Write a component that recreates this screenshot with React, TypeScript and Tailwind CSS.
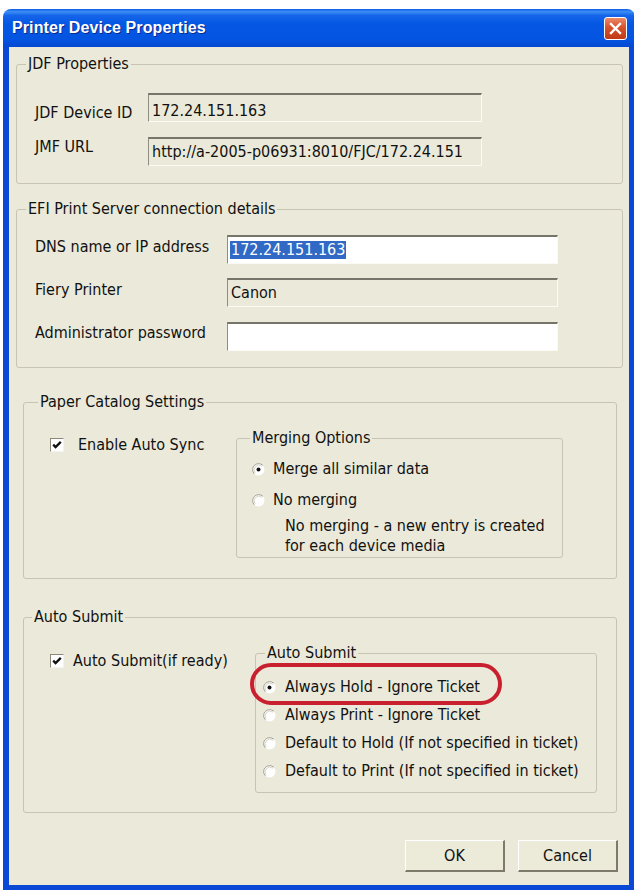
import React from "react";

function Radio({ checked = false }: { checked?: boolean }) {
  return (
    <svg width="13" height="13" viewBox="0 0 13 13" className="shrink-0">
      <circle cx="6.5" cy="6.5" r="6" fill="#ffffff" />
      <path d="M2.26 10.74 A6 6 0 0 1 10.74 2.26" stroke="#a19e90" strokeWidth="1" fill="none" />
      <path d="M3.2 9.8 A4.7 4.7 0 0 1 9.8 3.2" stroke="#d6d4c9" strokeWidth="1" fill="none" />
      {checked && <circle cx="6.5" cy="6.5" r="2" fill="#111111" />}
    </svg>
  );
}

function Checkbox() {
  return (
    <span className="w-[14px] h-[14px] shrink-0 bg-white border-t border-l border-t-[#8c897a] border-l-[#8c897a] border-b border-r border-b-[#f4f3ee] border-r-[#f4f3ee] flex items-center justify-center">
      <svg width="12" height="12" viewBox="0 0 12 12">
        <path d="M2.2 5.6 L4.6 8.1 L9.8 2.9" stroke="#101010" strokeWidth="2.3" fill="none" />
      </svg>
    </span>
  );
}

function Field({
  value,
  white = false,
  selected = false,
  width,
  extra = "",
}: {
  value?: string;
  white?: boolean;
  selected?: boolean;
  width: string;
  extra?: string;
}) {
  return (
    <div
      className={`${width} h-[29px] flex items-center pl-[2px] border-t-2 border-l border-t-[#77746a] border-l-[#8f8c80] border-b border-r border-b-[#fbfaf5] border-r-[#fbfaf5] ${
        white ? "bg-white" : "bg-[#ebe9d9]"
      } ${extra}`}
    >
      {value &&
        (selected ? (
          <span className="bg-[#316ac5] text-white leading-[18px] px-[1px]">{value}</span>
        ) : (
          <span className="leading-[18px] px-[1px]">{value}</span>
        ))}
    </div>
  );
}

function Button({ label }: { label: string }) {
  return (
    <button className="w-[100px] h-[32px] bg-[#ecead9] border-t border-l border-t-white border-l-white border-b-2 border-r-2 border-b-[#7d7a6c] border-r-[#7d7a6c] text-[16px] leading-[18px]">
      {label}
    </button>
  );
}

export default function App() {
  return (
    <div className="w-[634px] h-[890px] bg-white overflow-hidden pt-[9px] pl-[3px] font-['DejaVu_Sans_Condensed','DejaVu_Sans',sans-serif] text-[16px] text-[#111111]">
      <div className="w-[632px] h-[881px] flex flex-col rounded-t-[8px] overflow-hidden">
        {/* caption bar */}
        <div className="h-[38px] shrink-0 flex items-center justify-between pl-[9px] pr-[8px] bg-[linear-gradient(to_bottom,#0a5ce6_0%,#3d8df5_7%,#1565ea_17%,#0457e3_40%,#0454e2_80%,#0348d1_100%)]">
          <span className="font-['Liberation_Sans',sans-serif] font-bold text-[16px] tracking-[0.1px] text-white [text-shadow:1px_1px_0_#0a2a8a]">
            Printer Device Properties
          </span>
          <div className="w-[23px] h-[23px] rounded-[3px] border border-white bg-[linear-gradient(to_bottom,#ec8a6a,#d5522c_45%,#c03a16)] flex items-center justify-center">
            <svg width="13" height="13" viewBox="0 0 13 13">
              <path d="M2 2 L11 11 M11 2 L2 11" stroke="#ffffff" strokeWidth="2.4" strokeLinecap="square" />
            </svg>
          </div>
        </div>

        {/* client area */}
        <div className="flex-1 flex flex-col border-x-[6px] border-b-[5px] border-[#0a48d6] bg-[#ebe9d9]">
          {/* JDF Properties */}
          <fieldset className="mt-[8px] ml-[7px] w-[607px] h-[129px] border border-[#c7c4b4] rounded-[3px]">
            <legend className="ml-[9px] px-[2px] leading-[18px]">JDF Properties</legend>
            <div className="flex flex-col pl-[18px] pt-[20px]">
              <div className="flex items-start">
                <span className="w-[113px] mt-[11px] leading-[18px]">JDF Device ID</span>
                <Field value="172.24.151.163" width="w-[334px]" extra="pt-[6px] h-[28px]" />
              </div>
              <div className="flex items-start mt-[15px]">
                <span className="w-[113px] mt-[1px] leading-[18px]">JMF URL</span>
                <Field value="http://a-2005-p06931:8010/FJC/172.24.151" width="w-[334px]" />
              </div>
            </div>
          </fieldset>

          {/* EFI Print Server connection details */}
          <fieldset className="mt-[16px] ml-[7px] w-[607px] h-[168px] border border-[#c7c4b4] rounded-[3px]">
            <legend className="ml-[9px] px-[2px] leading-[18px]">EFI Print Server connection details</legend>
            <div className="flex flex-col pl-[18px] pt-[17px]">
              <div className="flex items-start">
                <span className="w-[192px] mt-[3px] leading-[18px]">DNS name or IP address</span>
                <Field value="172.24.151.163" white selected width="w-[331px]" />
              </div>
              <div className="flex items-start mt-[14px]">
                <span className="w-[192px] mt-[3px] leading-[18px]">Fiery Printer</span>
                <Field value="Canon" width="w-[331px]" />
              </div>
              <div className="flex items-start mt-[15px]">
                <span className="w-[192px] mt-[2px] leading-[18px]">Administrator password</span>
                <Field white width="w-[331px]" />
              </div>
            </div>
          </fieldset>

          {/* Paper Catalog Settings */}
          <fieldset className="mt-[25px] ml-[14px] w-[594px] h-[186px] border border-[#c7c4b4] rounded-[3px]">
            <legend className="ml-[14px] px-[2px] leading-[18px]">Paper Catalog Settings</legend>
            <div className="flex items-start pl-[26px] pt-[18px]">
              <div className="w-[186px] mt-[7px] flex items-center gap-[14px] leading-[18px]">
                <Checkbox />
                <span>Enable Auto Sync</span>
              </div>
              <fieldset className="w-[327px] h-[129px] border border-[#c7c4b4] rounded-[3px]">
                <legend className="ml-[13px] px-[2px] leading-[18px]">Merging Options</legend>
                <div className="flex flex-col pl-[15px] pt-[13px]">
                  <div className="flex items-center gap-[8px] leading-[18px]">
                    <Radio checked />
                    <span>Merge all similar data</span>
                  </div>
                  <div className="flex items-center gap-[8px] leading-[18px] mt-[13px]">
                    <Radio />
                    <span>No merging</span>
                  </div>
                  <div className="pl-[33px] mt-[7px] leading-[20px]">
                    <div>No merging - a new entry is created</div>
                    <div>for each device media</div>
                  </div>
                </div>
              </fieldset>
            </div>
          </fieldset>

          {/* Auto Submit */}
          <fieldset className="mt-[29px] ml-[14px] w-[594px] h-[205px] border border-[#c7c4b4] rounded-[3px]">
            <legend className="ml-[8px] px-[2px] leading-[18px]">Auto Submit</legend>
            <div className="flex items-start pl-[26px] pt-[18px]">
              <div className="w-[205px] mt-[8px] flex items-center gap-[9px] leading-[18px]">
                <Checkbox />
                <span>Auto Submit(if ready)</span>
              </div>
              <fieldset className="w-[342px] h-[149px] border border-[#c7c4b4] rounded-[3px]">
                <legend className="ml-[9px] px-[2px] leading-[18px]">Auto Submit</legend>
                <div className="flex flex-col gap-[10px] pl-[7px] pt-[16px]">
                  <div className="relative flex items-center gap-[9px] leading-[18px]">
                    <Radio checked />
                    <span>Always Hold - Ignore Ticket</span>
                    <div className="absolute left-[-13px] top-[-15px] w-[252px] h-[42px] rounded-[21px] border-[4px] border-[#c8202e]" />
                  </div>
                  <div className="flex items-center gap-[9px] leading-[18px]">
                    <Radio />
                    <span>Always Print - Ignore Ticket</span>
                  </div>
                  <div className="flex items-center gap-[9px] leading-[18px]">
                    <Radio />
                    <span>Default to Hold (If not specified in ticket)</span>
                  </div>
                  <div className="flex items-center gap-[9px] leading-[18px]">
                    <Radio />
                    <span>Default to Print (If not specified in ticket)</span>
                  </div>
                </div>
              </fieldset>
            </div>
          </fieldset>

          {/* dialog buttons */}
          <div className="mt-[27px] mr-[11px] flex justify-end gap-[13px]">
            <Button label="OK" />
            <Button label="Cancel" />
          </div>
        </div>
      </div>
    </div>
  );
}
